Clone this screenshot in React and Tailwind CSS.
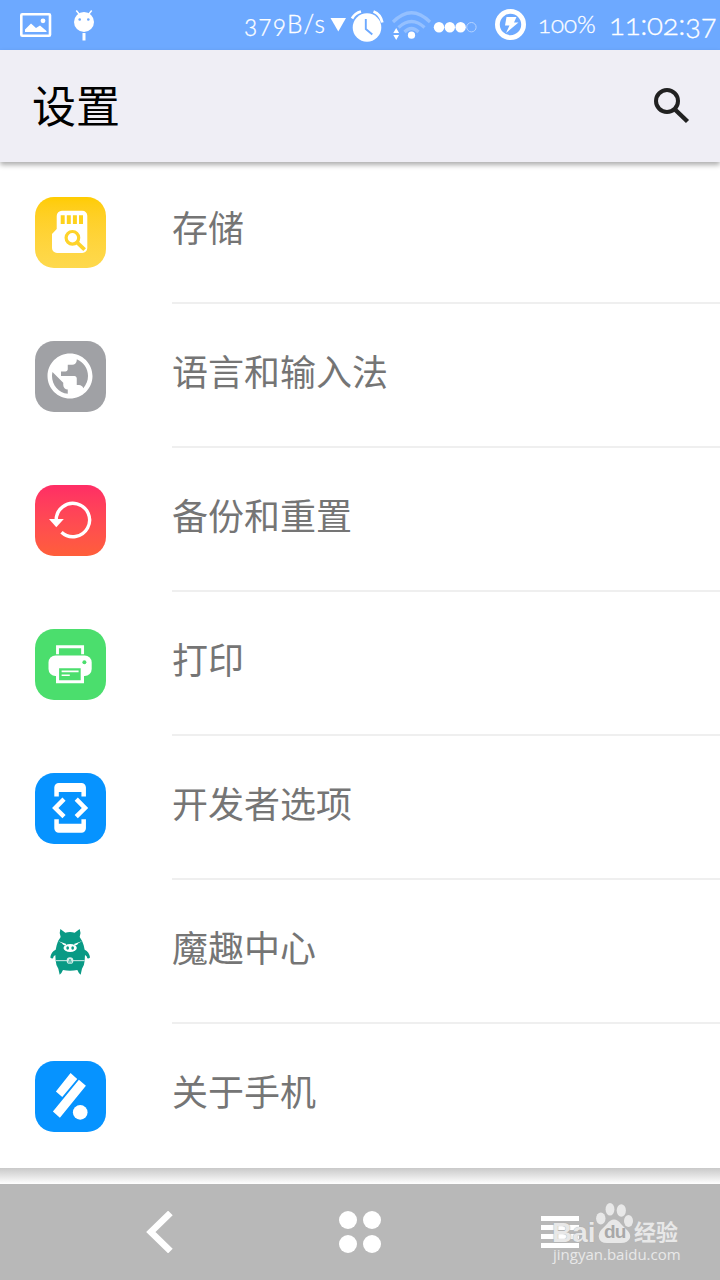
import React from 'react';

const StorageIcon = () => (
  <>
    <path fill="#fff" d="M27 13.7h20.3a5 5 0 0 1 5 5V51a5 5 0 0 1-5 5H22a5 5 0 0 1-5-5V37l4.7-5V19a5.2 5.2 0 0 1 5.3-5.3z" />
    <path fill="#fed21b" d="M25.7 18.2h4v8.8h-4zM31.8 18.2h4v8.8h-4zM37.9 18.2h4v8.8h-4zM44 18.2h4v8.8h-4z" />
    <circle cx="37.4" cy="40.8" r="6.3" fill="none" stroke="#fed32a" strokeWidth="3.2" />
    <path d="M42 45.4l7.6 7.2" stroke="#fed32a" strokeWidth="3.8" />
  </>
);

const GlobeIcon = () => (
  <path
    fill="#fff"
    transform="translate(8 8) scale(2.25)"
    d="M12 2C6.48 2 2 6.48 2 12s4.48 10 10 10 10-4.48 10-10S17.52 2 12 2zm-1 17.93c-3.95-.49-7-3.85-7-7.93 0-.62.08-1.21.21-1.79L9 15v1c0 1.100.9 2 2 2v1.930zm6.900-2.540c-.26-.81-1-1.390-1.900-1.390h-1v-3c0-.55-.45-1-1-1H8v-2h2c.55 0 1-.45 1-1V7h2c1.100 0 2-.9 2-2v-.41c2.930 1.190 5 4.060 5 7.410 0 2.080-.8 3.970-2.100 5.390z"
  />
);

const ResetIcon = () => (
  <>
    <path d="M21.2 35A16.7 16.7 0 1 1 26.5 47.2" fill="none" stroke="#fff" strokeWidth="3.4" />
    <path d="M14 34h14.8L21.300 42.300z" fill="#fff" />
  </>
);

const PrinterIcon = () => (
  <g transform="translate(.3 .2)">
    <path d="M22.2 25V17.5h25.1V25" fill="none" stroke="#fff" strokeWidth="2.9" />
    <rect x="13.2" y="26.2" width="43.2" height="20.6" rx="7" fill="#fff" />
    <path d="M20.7 38h28v16h-28z" fill="#fff" />
    <path d="M23.8 39.1h21.6v12H23.8z" fill="#4bde6d" />
    <path d="M26.3 41.4h17v1.7h-17zM26.3 45.2h8.2v1.6h-8.2z" fill="#fff" />
    <circle cx="49.1" cy="33" r="2" fill="#4bde6d" />
  </g>
);

const DevIcon = () => (
  <path
    fill="#fff"
    transform="translate(8 7.8) scale(2.26)"
    d="M7 5h10v2h2V3c0-1.1-.9-1.99-2-1.99L7 1c-1.1 0-2 .9-2 2v4h2V5zm8.41 11.59L20 12l-4.59-4.59L14 8.83 17.17 12 14 15.17l1.41 1.42zM10 15.17L6.83 12 10 8.83 8.59 7.41 4 12l4.59 4.59L10 15.17zM17 19H7v-2H5v4c0 1.1.9 2 2 2h10c1.1 0 2-.9 2-2v-4h-2v2z"
  />
);

const PigIcon = () => (
  <g transform="translate(-5 -7) scale(.3333)">
    <path
      fill="#099a85"
      d="M91 57L106 68Q120 64 134 68L149 57Q154 68 149 81Q158 93 161 106L164 119Q178 126 180 142Q180 146 172 145Q171 138 165 135L164 152Q163 167 156 176L152 194Q146 190 142 180Q120 184 99 180Q95 190 89 194L85 176Q78 167 77 152L76 135Q70 138 69 145Q61 146 61 142Q63 126 77 119L80 106Q83 92 92 81Q87 68 91 57Z"
    />
    <path fill="#fff" d="M84 93l25 9-2 4q-8 1-11-6zM157 93l-25 9 2 4q8 1 11-6z" />
    <ellipse cx="120.5" cy="114" rx="20" ry="12" fill="#fff" />
    <ellipse cx="113" cy="114" rx="4" ry="5" fill="#099a85" />
    <ellipse cx="128" cy="114" rx="4" ry="5" fill="#099a85" />
    <path d="M77 152h87" stroke="#d5eeea" strokeWidth="3" />
    <circle cx="120" cy="152" r="10" fill="#d5eeea" />
    <path d="M115 158l5-11 5 11M120 153v8" stroke="#099a85" strokeWidth="2" fill="none" />
  </g>
);

const AboutIcon = () => (
  <g fill="#fff" transform="translate(-.1 -.6) scale(.3333)">
    <path d="M107 38l20 18-45 54-19-17zM132 58l21 18-78 96-21-19z" />
    <circle cx="136" cy="156" r="22" />
  </g>
);

const ITEMS = [
  { label: '存储', icon: StorageIcon, tile: 'bg-linear-to-b from-[#ffcc00] to-[#fed94d]' },
  { label: '语言和输入法', icon: GlobeIcon, tile: 'bg-[#a0a1a5]' },
  { label: '备份和重置', icon: ResetIcon, tile: 'bg-linear-to-b from-[#ff2d65] to-[#ff5e3a]' },
  { label: '打印', icon: PrinterIcon, tile: 'bg-[#4bde6d]' },
  { label: '开发者选项', icon: DevIcon, tile: 'bg-[#0693ff]' },
  { label: '魔趣中心', icon: PigIcon, tile: '' },
  { label: '关于手机', icon: AboutIcon, tile: 'bg-[#0693ff]' },
];

function StatusBar() {
  return (
    <div className="flex h-[50px] shrink-0 items-center bg-[#6da9ff] font-[Lato] font-light text-white oldstyle-nums [-webkit-text-stroke:0.3px_white]">
      {/* Notifications */}
      <svg className="ml-5 h-[50px] w-[80px] shrink-0" viewBox="20 0 80 50">
        <rect x="21.3" y="14.3" width="28.7" height="21.4" rx="1" fill="none" stroke="#fff" strokeWidth="2.6" />
        <path d="M25 32v-2.5l6-6 5 4.5 4-2.5 6.5 5.5v1z" fill="#fff" />
        <circle cx="43" cy="20.8" r="2.4" fill="#fff" />
        <circle cx="84" cy="22" r="10" fill="#fff" />
        <path d="M79.5 14.5L76.3 10.5M88.5 14.5l3.2-4" stroke="#fff" strokeWidth="1.5" />
        <circle cx="79.7" cy="19.5" r="1.3" fill="#6da9ff" />
        <circle cx="88.3" cy="19.5" r="1.3" fill="#6da9ff" />
        <path d="M82.5 33h3v7.5h-3z" fill="#fff" />
      </svg>

      <span className="ml-[144px] w-[84px] pb-[2px] whitespace-nowrap text-[24.5px] leading-[48px] tracking-[1.1px]">379B/s</span>

      <svg className="h-[50px] w-[210px] shrink-0" viewBox="328 0 210 50">
        <path d="M330.5 18h15.5l-7.7 13.5z" fill="#fff" />
        {/* Alarm */}
        <circle cx="367" cy="27.5" r="14.3" fill="#fff" />
        <path d="M352 18.500q3-5.500 9-7M373.500 11.500q7 2.500 8.800 11" fill="none" stroke="#fff" strokeWidth="2.8" />
        <path d="M365.8 19v10l6.5 5.5" fill="none" stroke="#6da9ff" strokeWidth="1.9" />
        {/* Wifi */}
        <g fill="none" stroke="#94c0ff" strokeWidth="3.2">
          <path d="M393 22q18.500-18.500 37 0M398.500 27.500q13-12 26 0M404.500 32q7-7 14 0" />
        </g>
        <circle cx="411.5" cy="35.2" r="3.6" fill="#fff" />
        <path d="M393.3 33l2.9-5 2.9 5zM393.3 35l2.900 5 2.900-5z" fill="#fff" />
        {/* Signal */}
        <circle cx="439" cy="27.2" r="5.2" fill="#fff" />
        <circle cx="449.8" cy="27.2" r="5.2" fill="#fff" />
        <circle cx="460.6" cy="27.2" r="5.2" fill="#fff" />
        <circle cx="471.4" cy="27.2" r="4.7" fill="none" stroke="#b5d3ff" strokeWidth="1" />
        {/* Battery */}
        <circle cx="510.5" cy="24.5" r="13.1" fill="none" stroke="#fff" strokeWidth="4.8" />
        <path d="M506.5 17h10l-2.5 5.500h4.500l-12.500 10.500 3.500-7.500h-4.500z" fill="#fff" />
      </svg>

      <span className="w-[71px] pb-[2px] whitespace-nowrap text-[24px] leading-[48px]">100%</span>
      <span className="pb-[2px] whitespace-nowrap text-[29.500px] leading-[48px] tracking-[-0.3px]">11:02:37</span>
    </div>
  );
}

function NavBar() {
  return (
    <div className="relative flex h-24 shrink-0 items-center bg-[#b8b8b8]">
      <svg className="ml-[146px] h-[42px] w-[28px]" viewBox="0 0 28 42">
        <path d="M24.400 2L4.900 21l19.500 19" fill="none" stroke="#fff" strokeWidth="6.6" />
      </svg>
      <div className="ml-[165px] grid grid-cols-2 gap-[5.5px]">
        <i className="size-[18px] rounded-full bg-white" />
        <i className="size-[18px] rounded-full bg-white" />
        <i className="size-[18px] rounded-full bg-white" />
        <i className="size-[18px] rounded-full bg-white" />
      </div>
      <div className="ml-[160px] flex flex-col gap-1">
        <i className="h-[5px] w-[38px] bg-white" />
        <i className="h-[5px] w-[38px] bg-white" />
        <i className="h-[5px] w-[38px] bg-white" />
        <i className="h-[5px] w-[38px] bg-white" />
      </div>

      {/* Watermark */}
      <div className="absolute top-[16px] left-[552px] h-[70px] w-[132px] font-['Liberation_Sans',sans-serif] whitespace-nowrap text-[#e8e8e8]">
        <span className="absolute top-[17px] left-0 text-[28px] leading-8 font-bold [text-shadow:0_0_1px_#999]">Bai</span>
        <svg className="absolute top-0 left-[43px] h-[45px] w-[40px]" viewBox="595 1200 40 45" fill="#e8e8e8">
          <ellipse cx="600.8" cy="1218.500" rx="4.7" ry="6" />
          <ellipse cx="610" cy="1209.300" rx="4.4" ry="6.3" />
          <ellipse cx="621.3" cy="1210.500" rx="4.6" ry="6.2" />
          <ellipse cx="628.5" cy="1221" rx="4.5" ry="6" />
          <path d="M614 1219.500Q618 1219.500 621 1224L627 1230Q631 1234 630 1238Q628 1243 621 1243H607Q600 1243 599 1238Q598 1233 602 1229L607 1224Q610 1219.500 614 1219.500Z" />
        </svg>
        <span className="absolute top-[18px] left-[52px] text-[19px] leading-7 font-bold tracking-[-0.8px] text-[#a8a8a8]">du</span>
        <span className="absolute top-[16px] left-[82px] font-['Noto_Sans_CJK_SC',sans-serif] text-[22px] leading-7 font-bold">经验</span>
        <span className="absolute top-[44px] left-[1px] font-['Open_Sans',sans-serif] text-[15px] leading-5">jingyan.baidu.com</span>
      </div>
    </div>
  );
}

export default function App() {
  return (
    <div className="flex h-[1280px] w-[720px] flex-col overflow-hidden bg-white font-['Noto_Sans_CJK_SC',sans-serif]">
      <StatusBar />

      <header className="relative z-10 flex h-28 shrink-0 items-center justify-between bg-[#efeef5] pr-[30px] pl-8 shadow-[0_3px_5px_rgba(0,0,0,0.32)]">
        <h1 className="pb-1 text-[44px] leading-[60px] text-black">设置</h1>
        <svg className="h-[36px] w-[36px]" viewBox="0 0 36 36" fill="none" stroke="#212121">
          <circle cx="13" cy="13" r="11" strokeWidth="4" />
          <path d="M21.5 22l12 11.500" strokeWidth="4.5" />
        </svg>
      </header>

      {/* Settings list */}
      <ul className="-mt-0.5 shrink-0">
        {ITEMS.map(({ label, icon: Icon, tile }) => (
          <li key={label} className="group flex h-36 items-start pl-[35px]">
            <div className={`mt-[37px] size-[71px] shrink-0 overflow-hidden rounded-[19px] ${tile}`}>
              <svg className="size-[71px]" viewBox="0 0 71 71">
                <Icon />
              </svg>
            </div>
            <div className="ml-[66px] h-36 flex-1 border-b-2 border-[#efefef] pt-10 text-[36px] leading-[52px] text-[#757575] group-last:border-b-0">
              {label}
            </div>
          </li>
        ))}
      </ul>

      <div className="h-4 shrink-0 bg-linear-to-b from-[#c9c9c9] via-[#e4e4e4] to-white" />
      <NavBar />
    </div>
  );
}
